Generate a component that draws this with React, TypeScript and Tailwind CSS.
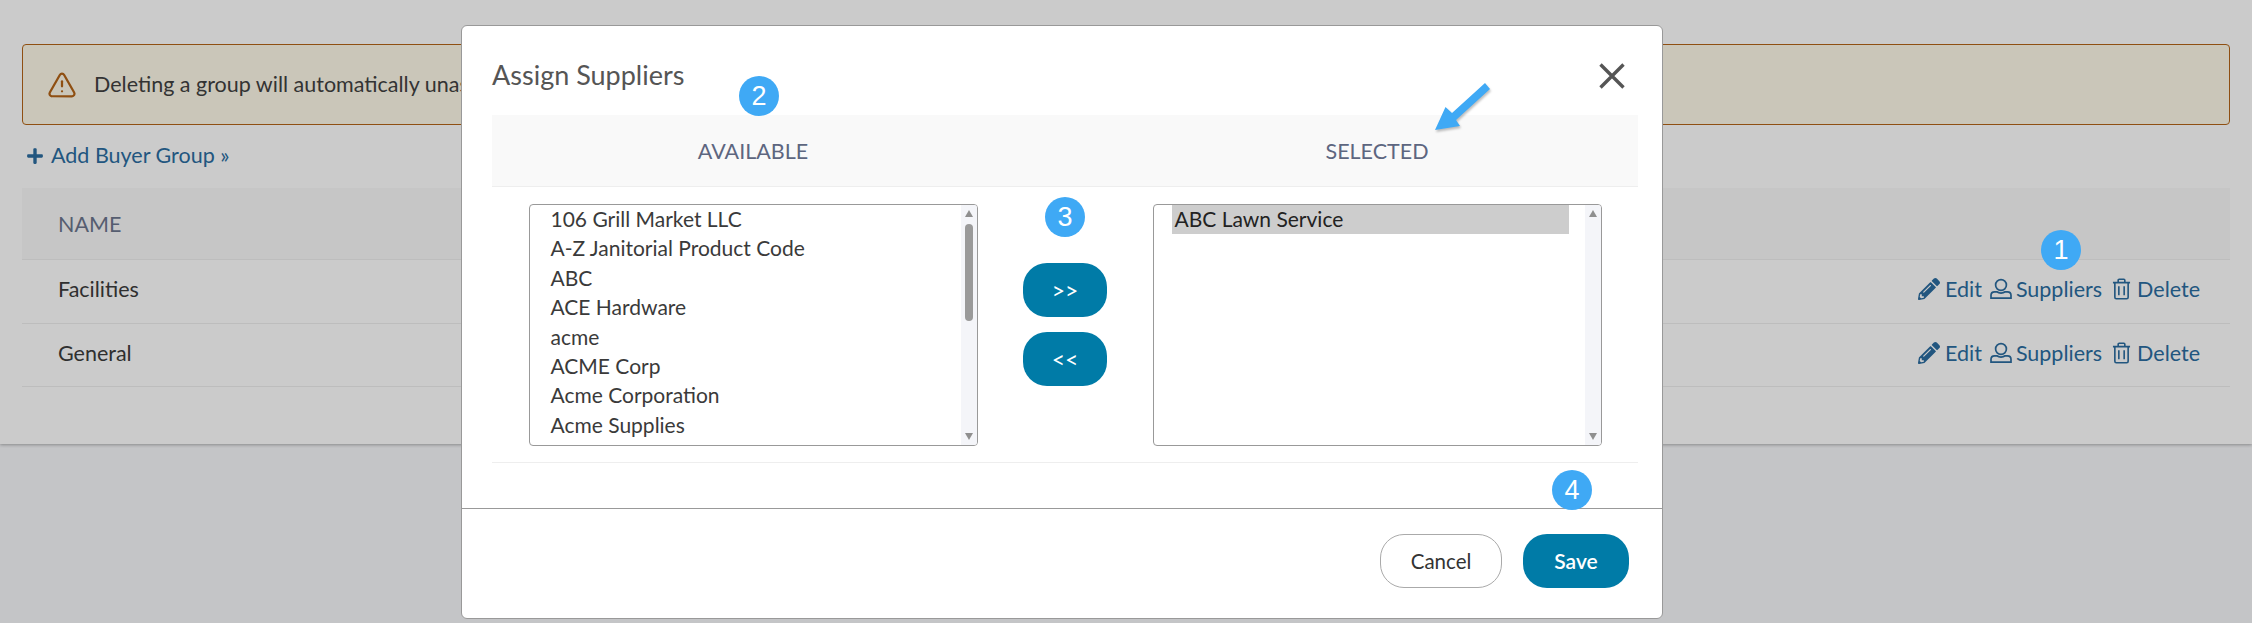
import { FaPencilAlt, FaPlus } from "react-icons/fa";
import { TriangleAlert } from "lucide-react";

const available = [
  "106 Grill Market LLC",
  "A-Z Janitorial Product Code",
  "ABC",
  "ACE Hardware",
  "acme",
  "ACME Corp",
  "Acme Corporation",
  "Acme Supplies",
];

function UserIcon() {
  return (
    <svg viewBox="0 0 22 22" className="w-[22px] h-[22px]" fill="none" stroke="currentColor" strokeWidth="1.7">
      <circle cx="11" cy="7" r="5.4" />
      <path d="M1 20.2v-3c0-2 1.5-3.4 3.6-3.4h2.2c1.2.9 2.6 1.3 4.2 1.3s3-.4 4.2-1.3h2.2c2.1 0 3.6 1.4 3.6 3.4v3z" />
    </svg>
  );
}

function TrashIcon() {
  return (
    <svg viewBox="0 0 20 23" className="w-[19px] h-[22px]" fill="none" stroke="currentColor" strokeWidth="1.7">
      <path d="M1 4.8h18M6.5 4.5V2.2c0-.6.4-1 1-1h5c.6 0 1 .4 1 1v2.3" />
      <path d="M3 5v15.2c0 .9.6 1.5 1.5 1.5h11c.9 0 1.5-.6 1.5-1.5V5" />
      <path d="M7.2 8.5v9.6M12.8 8.5v9.6" />
    </svg>
  );
}

function Badge({ n, className }: { n: number; className: string }) {
  return (
    <div className={`absolute w-10 h-10 rounded-full bg-[#3fa9f5] text-white flex items-center justify-center text-[27px] font-['Liberation_Sans',sans-serif] ${className}`}>
      {n}
    </div>
  );
}

function Row({ name }: { name: string }) {
  return (
    <div className="flex items-center justify-between h-[63.5px] pb-1 pl-9 pr-[30px] border-b border-[#bdbdbd] text-[#2f2f2f]">
      <span>{name}</span>
      <div className="flex items-center text-[#22567f]">
        <FaPencilAlt className="w-[22px] h-[22px]" />
        <span className="ml-[5px]">Edit</span>
        <span className="ml-2"><UserIcon /></span>
        <span className="ml-1">Suppliers</span>
        <span className="ml-[10px]"><TrashIcon /></span>
        <span className="ml-[6px]">Delete</span>
      </div>
    </div>
  );
}

function ScrollTrack({ thumb }: { thumb?: boolean }) {
  return (
    <div className="absolute right-0 top-0 bottom-0 w-[16px] bg-[#f4f5f9] flex flex-col items-center justify-between py-[5px]">
      <div className="w-0 h-0 border-x-[4.5px] border-x-transparent border-b-[7px] border-b-[#8f8f8f]" />
      {thumb && <div className="absolute top-[19px] w-[8px] h-[97px] rounded-full bg-[#9a9a9a]" />}
      <div className="w-0 h-0 border-x-[4.5px] border-x-transparent border-t-[7px] border-t-[#8f8f8f]" />
    </div>
  );
}

export default function App() {
  return (
    <div className="relative h-[623px] w-full overflow-hidden bg-[#c4c5c7] text-[21.5px] font-['Lato',sans-serif]">
      {/* Page behind the dialog */}
      <div className="h-[444px] bg-[#cbcbcb] px-[22px] pt-[44px] shadow-[0_1px_3px_rgba(0,0,0,0.3)]">
        <div className="flex items-center h-[81px] pl-[24px] border border-[#8f4f12] rounded bg-[#cac6b9] text-[#333]">
          <TriangleAlert className="w-[30px] h-[30px] text-[#8f4f12]" strokeWidth={1.8} />
          <span className="ml-[17px] whitespace-nowrap">Deleting a group will automatically unas</span>
        </div>
        <div className="flex items-center h-[63px] pb-[2px] pl-[4px] text-[#22567f]">
          <FaPlus className="w-[18px] h-[18px]" />
          <span className="ml-[7px]">Add Buyer Group »</span>
        </div>
        <div className="flex items-center h-[72px] pt-[2px] pl-9 bg-[#c6c6c6] border-b border-[#bdbdbd] text-[#555d70]">NAME</div>
        <Row name="Facilities" />
        <Row name="General" />
      </div>

      <Badge n={1} className="left-[2041px] top-[230px]" />

      {/* Dialog */}
      <div className="absolute left-[461px] top-[25px] w-[1202px] h-[594px] rounded-md border border-[#999] bg-white">
        <div className="flex items-center justify-between h-[89px] pl-[30px] pr-[37px]">
          <h2 className="text-[27px] text-[#555] mt-[10px]">Assign Suppliers</h2>
          <svg viewBox="0 0 26 26" className="w-[26px] h-[26px] mt-[10px] text-[#555]" stroke="currentColor" strokeWidth="3.4">
            <path d="M1.5 1.5l23 23M24.5 1.5l-23 23" />
          </svg>
        </div>
        <div className="ml-[30px] mr-[24px]">
          <div className="grid grid-cols-[522px_102px_522px] items-center h-[72px] pt-[2px] bg-[#f9f9f9] border-b border-[#eee] text-[#5d6680]">
            <span className="text-center">AVAILABLE</span>
            <span />
            <span className="text-center">SELECTED</span>
          </div>
          <div className="grid grid-cols-[522px_102px_522px] h-[276px] pt-[17px] border-b border-[#eee]">
            <div className="flex justify-center">
              <div className="relative w-[449px] h-[242px] border border-[#999] rounded pl-[21px] overflow-hidden text-[#3a3a3a] text-[21px] leading-[29.4px]">
                <div className="-mt-[1px]">
                  {available.map((s) => (
                    <div key={s}>{s}</div>
                  ))}
                </div>
                <ScrollTrack thumb />
              </div>
            </div>
            <div className="flex flex-col items-center gap-[15px] pt-[59px]">
              <button className="w-[84px] h-[54px] rounded-[24px] bg-[#007ba7] text-white text-[23px]">&gt;&gt;</button>
              <button className="w-[84px] h-[54px] rounded-[24px] bg-[#007ba7] text-white text-[23px]">&lt;&lt;</button>
            </div>
            <div className="flex justify-center">
              <div className="relative w-[449px] h-[242px] border border-[#999] rounded pl-[18px] overflow-hidden text-[#222] text-[21px]">
                <div className="w-[397px] h-[29px] pl-[3px] leading-[27px] bg-[#cdcdcd]">ABC Lawn Service</div>
                <ScrollTrack />
              </div>
            </div>
          </div>
        </div>
        <div className="mt-[45px] border-t border-[#999] flex justify-end gap-[21px] pt-[25px] pr-[33px]">
          <button className="w-[122px] h-[54px] rounded-[24px] border border-[#aaa] bg-white text-[#333] text-[20.5px]">Cancel</button>
          <button className="w-[106px] h-[54px] rounded-[24px] bg-[#007ba7] text-white font-semibold text-[21px]">Save</button>
        </div>
      </div>

      <Badge n={2} className="left-[739px] top-[76px]" />
      <Badge n={3} className="left-[1045px] top-[197px]" />
      <Badge n={4} className="left-[1552px] top-[470px]" />

      {/* Callout arrow */}
      <svg viewBox="0 0 60 54" className="absolute left-[1432px] top-[80px] w-[60px] h-[54px] drop-shadow-[1px_2px_1px_rgba(0,0,0,0.25)]" fill="#3fa9f5">
        <path d="M3 50L13.5 27l6.5 6L53 3l5 6-34 31 4 6z" />
      </svg>
    </div>
  );
}
